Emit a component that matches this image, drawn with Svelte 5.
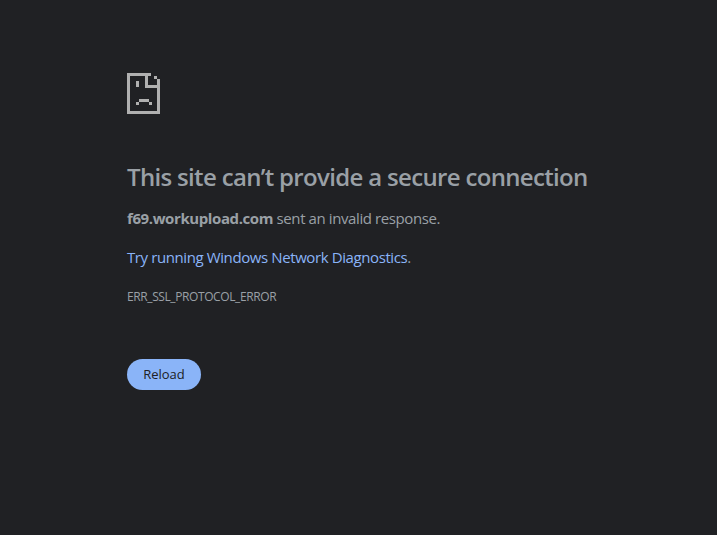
<script>
  const host = 'f69.workupload.com';
  const code = 'ERR_SSL_PROTOCOL_ERROR';
</script>

<main class="error-page">
  <div class="icon-wrap">
    <svg class="page-icon" width="33" height="41" viewBox="0 0 33 41" shape-rendering="crispEdges">
      <path d="M0 0H24V3H3V38H30V6H33V41H0Z" />
      <path d="M18 0H21V12H30V15H18Z" />
      <path d="M27 3H30V6H27Z" />
      <path d="M9 8H12V14H9Z" />
      <path d="M12 26H22V29H12Z M9 29H12V32H9Z M22 29H25V32H22Z" />
    </svg>
  </div>

  <h1 class="title">This site can’t provide a secure connection</h1>
  <p class="summary"><strong>{host}</strong> sent an invalid response.</p>
  <p class="suggestion"><a href="#diagnose">Try running Windows Network Diagnostics</a>.</p>
  <div class="code">{code}</div>

  <button class="reload">Reload</button>
</main>

<style>
  :global(body) {
    margin: 0;
    background: #202124;
    font-family: 'Open Sans', 'Noto Sans', sans-serif;
  }

  .error-page {
    min-height: 535px;
    box-sizing: border-box;
    padding: 73px 0 0 127px;
    color: #9aa0a6;
    font-size: 15px;
  }

  .icon-wrap {
    height: 41px;
    margin-bottom: 48px;
  }

  .page-icon {
    display: block;
    fill: #b0b0b0;
  }

  .title {
    margin: 0 0 16px;
    font-size: 24px;
    font-weight: 600;
    line-height: 29px;
    letter-spacing: -0.67px;
    color: #9aa0a6;
  }

  .summary,
  .suggestion {
    margin: 0 0 17px;
    font-size: 15px;
    line-height: 22px;
    letter-spacing: -0.4px;
  }

  .summary strong {
    font-weight: 700;
  }

  .suggestion a {
    color: #8ab4f8;
    text-decoration: none;
  }

  .code {
    margin-top: 21px;
    font-size: 12px;
    line-height: 16px;
    letter-spacing: -0.4px;
  }

  .reload {
    display: block;
    margin-top: 54px;
    width: 74px;
    height: 31px;
    padding: 0 0 2px;
    border: none;
    border-radius: 16px;
    background: #8ab4f8;
    color: #202124;
    font-family: inherit;
    font-size: 13px;
  }
</style>
